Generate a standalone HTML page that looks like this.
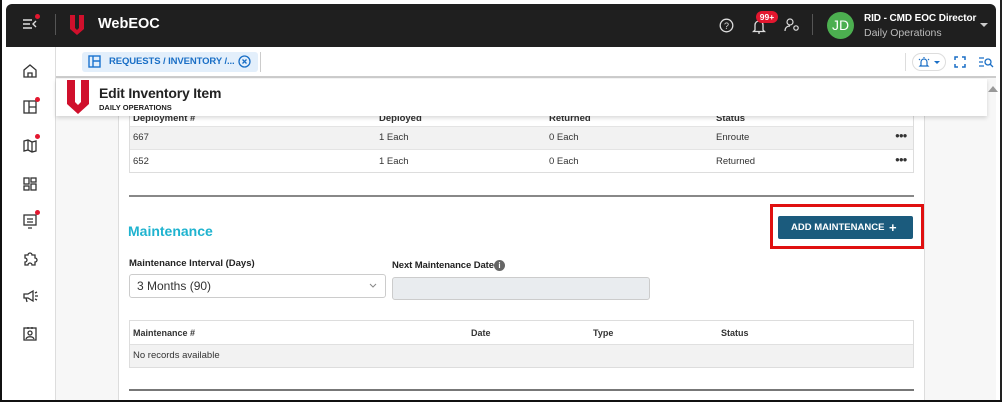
<!DOCTYPE html>
<html><head><style>
*{box-sizing:border-box;margin:0;padding:0}
body{width:1002px;height:402px;overflow:hidden;background:#fff;font-family:"Liberation Sans",Arial,sans-serif;position:relative;font-size:10px;color:#333}
.a{position:absolute;white-space:nowrap}
</style></head><body>
<div class="a" style="left:0;top:0;width:1002px;height:402px;border:2px solid #111;border-top:none;border-right:2px solid #222"></div>
<div class="a" style="left:2px;top:0;width:998px;height:4px;background:#fff"></div>
<!-- top bar -->
<div class="a" style="left:6px;top:4px;width:990px;height:43px;background:#1f1f1f;border-radius:6px 6px 0 0"></div>
<svg class="a" style="left:22px;top:17px" width="16" height="14"><path d="M1 3h9M1 7h7M1 11h9M14 4l-3 3 3 3" stroke="#ddd" stroke-width="1.4" fill="none"/></svg>
<div class="a" style="left:35px;top:14px;width:5px;height:5px;border-radius:50%;background:#e3172f"></div>
<div class="a" style="left:55px;top:14px;width:1px;height:21px;background:#555"></div>
<svg class="a" style="left:70px;top:15px" width="14" height="20"><path d="M0 0h5v13l2 2 2-2V0h5v14l-7 6-7-6z" fill="#d0102c"/></svg>
<div class="a" style="left:98px;top:16px;color:#fff;font-weight:bold;font-size:14.5px">WebEOC</div>
<svg class="a" style="left:719px;top:18px" width="15" height="15"><circle cx="7.5" cy="7.5" r="6.3" stroke="#ddd" stroke-width="1.3" fill="none"/><text x="7.5" y="11" font-size="9" fill="#ddd" text-anchor="middle" font-family="Liberation Sans">?</text></svg>
<svg class="a" style="left:752px;top:18px" width="14" height="16"><path d="M3 12V7a4 4 0 018 0v5l1.5 1.5h-11zM6 15h2" stroke="#ddd" stroke-width="1.3" fill="none"/></svg>
<div class="a" style="left:756px;top:11px;width:22px;height:12px;border-radius:6px;background:#e3172f;color:#fff;font-size:8.5px;font-weight:bold;text-align:center;line-height:12px">99+</div>
<svg class="a" style="left:784px;top:18px" width="16" height="14"><circle cx="6" cy="4" r="3" stroke="#ddd" stroke-width="1.2" fill="none"/><path d="M1 13c0-4 3-5 5-5" stroke="#ddd" stroke-width="1.2" fill="none"/><circle cx="12" cy="10" r="2.2" stroke="#ddd" stroke-width="1.2" fill="none"/></svg>
<div class="a" style="left:812px;top:14px;width:1px;height:21px;background:#555"></div>
<div class="a" style="left:827px;top:12px;width:27px;height:27px;border-radius:50%;background:#4caf50;color:#fff;font-size:14px;text-align:center;line-height:27px">JD</div>
<div class="a" style="left:864px;top:13px;color:#fff;font-weight:bold;font-size:10px;letter-spacing:-.1px">RID - CMD EOC Director</div>
<div class="a" style="left:864px;top:27px;color:#bbb;font-size:10.5px">Daily Operations</div>
<div class="a" style="left:980px;top:23px;border:4px solid transparent;border-top:4px solid #ccc"></div>
<!-- sidebar -->
<div class="a" style="left:2px;top:47px;width:54px;height:353px;background:#fff;border-right:1px solid #ddd"></div>
<svg class="a" style="left:22px;top:63px" width="16" height="16" fill="none" stroke="#333" stroke-width="1.3"><path d="M2 7l6-5 6 5v7H2zM6 14v-4h4v4"/></svg>
<svg class="a" style="left:23px;top:100px" width="15" height="15" fill="none" stroke="#333" stroke-width="1.3"><rect x="1" y="1" width="12" height="12"/><path d="M6 1v12M6 7h7"/></svg>
<div class="a" style="left:35px;top:97px;width:5px;height:5px;border-radius:50%;background:#e3172f"></div>
<svg class="a" style="left:23px;top:139px" width="15" height="14" fill="none" stroke="#333" stroke-width="1.3"><path d="M1 2l4-1 4 2 4-1v10l-4 1-4-2-4 1zM5 1v10M9 3v10"/></svg>
<div class="a" style="left:35px;top:134px;width:5px;height:5px;border-radius:50%;background:#e3172f"></div>
<svg class="a" style="left:23px;top:177px" width="15" height="14" fill="none" stroke="#333" stroke-width="1.3"><rect x="1" y="1" width="5" height="6"/><rect x="8" y="1" width="5" height="4"/><rect x="1" y="9" width="5" height="4"/><rect x="8" y="7" width="5" height="6"/></svg>
<svg class="a" style="left:23px;top:214px" width="15" height="15" fill="none" stroke="#333" stroke-width="1.3"><rect x="1" y="1" width="12" height="10"/><path d="M5 14h4M4 5h6M4 8h6"/></svg>
<div class="a" style="left:35px;top:210px;width:5px;height:5px;border-radius:50%;background:#e3172f"></div>
<svg class="a" style="left:23px;top:251px" width="15" height="15" fill="none" stroke="#333" stroke-width="1.3"><path d="M2 4h3a2 2 0 014 0h3v3a2 2 0 010 4v3H9a2 2 0 00-4 0H2v-3a2 2 0 000-4z"/></svg>
<svg class="a" style="left:23px;top:289px" width="16" height="14" fill="none" stroke="#333" stroke-width="1.3"><path d="M1 5h4l5-3v10L5 9H1zM3 9l1 4M12 4l2-1M12 7h3M12 10l2 1"/></svg>
<svg class="a" style="left:23px;top:326px" width="14" height="15" fill="none" stroke="#333" stroke-width="1.3"><rect x="1" y="2" width="12" height="12"/><circle cx="7" cy="7" r="2"/><path d="M3 13c1-3 7-3 8 0M5 1v2M9 1v2"/></svg>
<!-- content bg -->
<div class="a" style="left:56px;top:47px;width:940px;height:353px;background:#f7f7f7"></div>
<div class="a" style="left:56px;top:47px;width:940px;height:31px;background:#fff;border-bottom:2px solid #ccc"></div>
<div class="a" style="left:82px;top:52px;width:176px;height:20px;background:#e3effb;border-radius:3px"></div>
<svg class="a" style="left:88px;top:55px" width="13" height="13" fill="none" stroke="#1a73d0" stroke-width="1.4"><rect x="1" y="1" width="11" height="11"/><path d="M5 1v11M5 6h7"/></svg>
<div class="a" style="left:109px;top:56px;color:#1a6fc6;font-size:9.5px;font-weight:bold;letter-spacing:-.1px">REQUESTS / INVENTORY /...</div>
<svg class="a" style="left:238px;top:55px" width="13" height="13" fill="none" stroke="#1a6fc6" stroke-width="1.3"><circle cx="6.5" cy="6.5" r="5.5"/><path d="M4.5 4.5l4 4M8.5 4.5l-4 4"/></svg>
<div class="a" style="left:260px;top:52px;width:1px;height:20px;background:#ccc"></div>
<div class="a" style="left:905px;top:53px;width:1px;height:18px;background:#ddd"></div>
<div class="a" style="left:912px;top:53px;width:34px;height:18px;border:1px solid #ddd;border-radius:9px"></div>
<svg class="a" style="left:917px;top:56px" width="14" height="12" fill="none" stroke="#1a6fc6" stroke-width="1.2"><path d="M4 9V6a3 3 0 016 0v3l1 1H3zM2 3l1 1M12 3l-1 1M7 1v1"/></svg>
<div class="a" style="left:934px;top:61px;border:3px solid transparent;border-top:3px solid #1a6fc6"></div>
<svg class="a" style="left:954px;top:56px" width="12" height="12" fill="none" stroke="#1a6fc6" stroke-width="1.5"><path d="M1 4V1h3M8 1h3v3M11 8v3H8M4 11H1V8"/></svg>
<svg class="a" style="left:978px;top:56px" width="16" height="12" fill="none" stroke="#1a6fc6" stroke-width="1.3"><path d="M1 2h5M1 6h4M1 10h5"/><circle cx="10" cy="6" r="3"/><path d="M12 8l3 3"/></svg>
<!-- main panel -->
<div class="a" style="left:118px;top:80px;width:807px;height:320px;background:#fff;border-left:1px solid #ddd;border-right:1px solid #ddd"></div>
<!-- table 1 -->
<div class="a" style="left:129px;top:100px;width:785px;height:73px;border:1px solid #ddd;border-top:none"></div>
<div class="a" style="left:133px;top:113px;font-size:9.5px;font-weight:bold">Deployment #</div>
<div class="a" style="left:379px;top:113px;font-size:9.5px;font-weight:bold">Deployed</div>
<div class="a" style="left:549px;top:113px;font-size:9.5px;font-weight:bold">Returned</div>
<div class="a" style="left:716px;top:113px;font-size:9.5px;font-weight:bold">Status</div>
<div class="a" style="left:130px;top:126px;width:783px;height:23px;background:#f2f2f2;border-top:1px solid #e4e4e4"></div>
<div class="a" style="left:130px;top:149px;width:783px;height:1px;background:#e4e4e4"></div>
<div class="a" style="left:133px;top:132px;font-size:9.5px">667</div>
<div class="a" style="left:379px;top:132px;font-size:9.5px">1 Each</div>
<div class="a" style="left:549px;top:132px;font-size:9.5px">0 Each</div>
<div class="a" style="left:716px;top:132px;font-size:9.5px">Enroute</div>
<div class="a" style="left:895px;top:131px;font-size:8px;font-weight:bold;letter-spacing:-1px">●●●</div>
<div class="a" style="left:133px;top:156px;font-size:9.5px">652</div>
<div class="a" style="left:379px;top:156px;font-size:9.5px">1 Each</div>
<div class="a" style="left:549px;top:156px;font-size:9.5px">0 Each</div>
<div class="a" style="left:716px;top:156px;font-size:9.5px">Returned</div>
<div class="a" style="left:895px;top:155px;font-size:8px;font-weight:bold;letter-spacing:-1px">●●●</div>
<div class="a" style="left:129px;top:195px;width:785px;height:2px;background:#888"></div>
<!-- header overlay -->
<div class="a" style="left:56px;top:79px;width:931px;height:37px;background:#fff;box-shadow:0 2px 4px rgba(0,0,0,.15)"></div>
<svg class="a" style="left:67px;top:80px" width="22" height="34"><path d="M0 0h8v22l3 3 3-3V0h8v24l-11 10-11-10z" fill="#d0102c"/></svg>
<div class="a" style="left:99px;top:85px;font-size:14px;font-weight:bold;color:#222;letter-spacing:-.2px">Edit Inventory Item</div>
<div class="a" style="left:99px;top:103px;font-size:7.5px;font-weight:bold;color:#222">DAILY OPERATIONS</div>
<div class="a" style="left:988px;top:86px;border:5px solid transparent;border-bottom:6px solid #999;border-top:none"></div>
<!-- maintenance -->
<div class="a" style="left:128px;top:223px;font-size:14px;font-weight:bold;color:#1fb3cf">Maintenance</div>
<div class="a" style="left:770px;top:204px;width:154px;height:45px;border:3px solid #e01010"></div>
<div class="a" style="left:778px;top:216px;width:135px;height:23px;background:#1b5b7d;border-radius:2px;color:#fff;font-size:9.5px;font-weight:bold;line-height:23px;padding-left:13px">ADD MAINTENANCE<span style="position:absolute;left:111px;top:0;font-size:13px">+</span></div>
<div class="a" style="left:129px;top:258px;font-size:9.5px;font-weight:bold;color:#222">Maintenance Interval (Days)</div>
<div class="a" style="left:392px;top:260px;font-size:9.5px;font-weight:bold;color:#222;letter-spacing:-.1px">Next Maintenance Date</div>
<div class="a" style="left:494px;top:260px;width:11px;height:11px;border-radius:50%;background:#666;color:#fff;font-size:8px;text-align:center;line-height:11px;font-weight:bold">i</div>
<div class="a" style="left:129px;top:274px;width:257px;height:24px;border:1px solid #ccc;border-radius:3px;font-size:12px;line-height:22px;padding-left:7px;color:#333">3 Months (90)</div>
<svg class="a" style="left:369px;top:283px" width="8" height="6"><path d="M1 1l3 3 3-3" stroke="#888" fill="none"/></svg>
<div class="a" style="left:392px;top:277px;width:258px;height:23px;background:#e9ecef;border:1px solid #ccc;border-radius:3px"></div>
<div class="a" style="left:129px;top:320px;width:785px;height:48px;border:1px solid #ddd"></div>
<div class="a" style="left:130px;top:344px;width:783px;height:23px;background:#f2f2f2;border-top:1px solid #e0e0e0"></div>
<div class="a" style="left:133px;top:328px;font-size:9px;font-weight:bold;color:#333">Maintenance #</div>
<div class="a" style="left:471px;top:328px;font-size:9px;font-weight:bold;color:#333">Date</div>
<div class="a" style="left:593px;top:328px;font-size:9px;font-weight:bold;color:#333">Type</div>
<div class="a" style="left:721px;top:328px;font-size:9px;font-weight:bold;color:#333">Status</div>
<div class="a" style="left:133px;top:350px;font-size:9.5px;color:#333">No records available</div>
<div class="a" style="left:129px;top:389px;width:785px;height:2px;background:#777"></div>
<div class="a" style="left:0;top:400px;width:1002px;height:2px;background:#111"></div>
</body></html>
